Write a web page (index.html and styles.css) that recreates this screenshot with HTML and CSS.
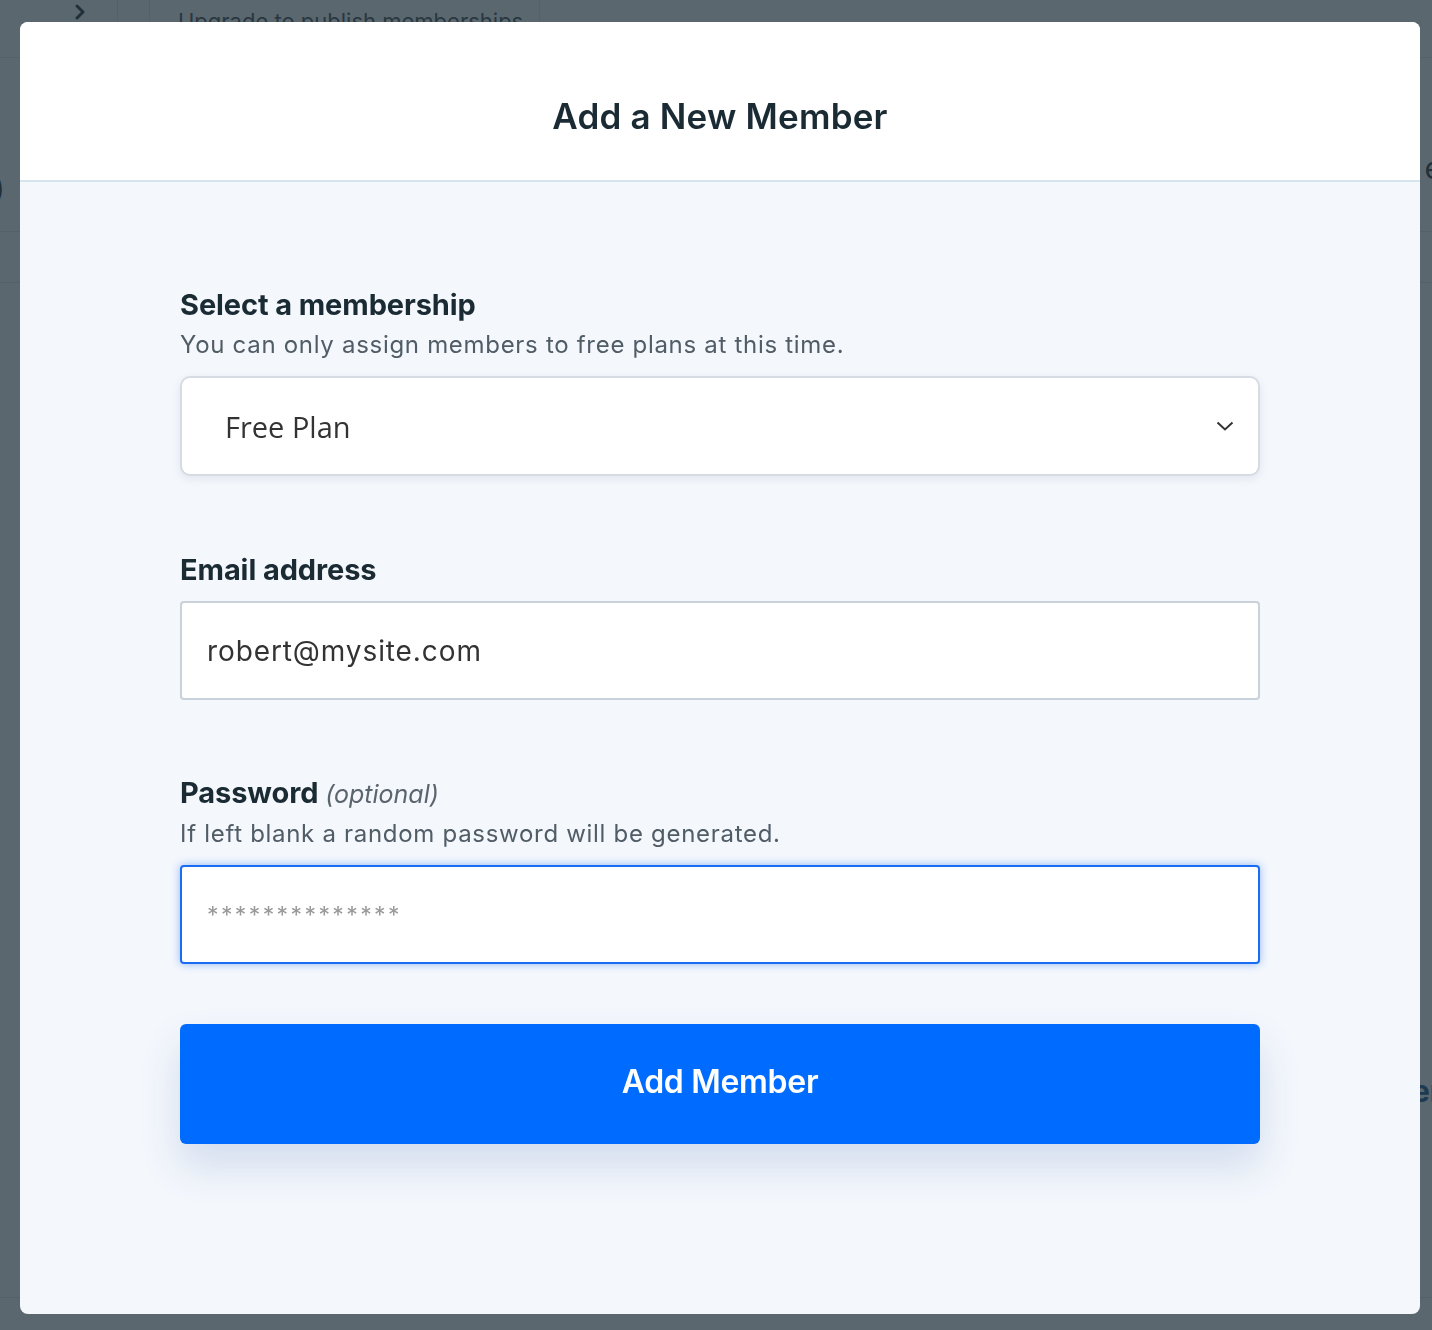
FILE: index.html
```html
<!DOCTYPE html>
<html lang="en">
<head>
<meta charset="utf-8">
<title>Add a New Member</title>
<link rel="stylesheet" href="styles.css">
</head>
<body>
<div class="page">
  <div class="topbar">
    <div class="cell cell-nav">
      <svg class="nav-chev" width="14" height="16" viewBox="0 0 14 16"><path d="M4 2 L10 8 L4 14" fill="none" stroke="#2a3a44" stroke-width="3" stroke-linecap="round" stroke-linejoin="round"/></svg>
    </div>
    <div class="cell cell-gap"></div>
    <div class="cell cell-text">Upgrade to publish memberships</div>
    <div class="cell cell-rest"></div>
  </div>
  <div class="row row-a"><span class="edge-l">)</span><span class="edge-r">e</span></div>
  <div class="row row-b"></div>
  <div class="row row-c"><span class="edge-r blue">er</span></div>
</div>

<div class="overlay">
  <div class="modal">
    <div class="modal-head">
      <h1 class="modal-title">Add a New Member</h1>
    </div>
    <form class="modal-body">
      <label class="field-label" for="plan">Select a membership</label>
      <p class="field-help">You can only assign members to free plans at this time.</p>
      <div class="select-wrap">
        <select id="plan" class="select">
          <option>Free Plan</option>
        </select>
        <svg class="select-chev" width="18" height="12" viewBox="0 0 18 12"><path d="M1.5 2.5 L9 9.5 L16.5 2.5" fill="none" stroke="#333" stroke-width="2"/></svg>
      </div>

      <label class="field-label label-email" for="email">Email address</label>
      <input id="email" class="input input-email" type="email" value="robert@mysite.com">

      <label class="field-label label-pass" for="pass">Password <span class="optional">(optional)</span></label>
      <p class="field-help">If left blank a random password will be generated.</p>
      <input id="pass" class="input input-pass" type="password" placeholder="**************">

      <button type="button" class="btn">Add Member</button>
    </form>
  </div>
</div>
</body>
</html>
```

FILE: styles.css
```css
* { box-sizing: border-box; }

html, body {
  margin: 0;
  padding: 0;
}

body {
  width: 1432px;
  height: 1330px;
  overflow: hidden;
  background: #ffffff;
  font-family: Inter, "Noto Sans", sans-serif;
}

/* background page (under the overlay) */
.page {
  width: 1432px;
  height: 1330px;
  background: #ffffff;
}

.topbar {
  display: flex;
  height: 58px;
  border-bottom: 1px solid #e3e7ea;
}

.cell {
  height: 58px;
}

.cell-nav {
  width: 118px;
  display: flex;
  justify-content: flex-end;
  padding: 4px 30px 0 0;
  border-right: 1px solid #e6e9ec;
}

.cell-gap {
  width: 32px;
  border-right: 1px solid #e6e9ec;
}

.cell-text {
  width: 390px;
  padding: 8px 0 0 28px;
  font-size: 22px;
  color: #4b555c;
  border-right: 1px solid #e6e9ec;
}

.cell-rest {
  flex: 1;
}

.row {
  display: flex;
  align-items: flex-start;
  border-bottom: 1px solid #e3e7ea;
  color: #2f3b43;
}

.row-a {
  height: 174px;
  font-size: 30px;
}

.row-b {
  height: 51px;
}

.row-c {
  height: 1015px;
  font-size: 30px;
  font-weight: 700;
}

.edge-l {
  margin: 112px 0 0 -6px;
}

.edge-r {
  margin: 92px -10px 0 auto;
}

.row-c .edge-r {
  margin-top: 790px;
}

.blue {
  color: #1d5d98;
}

/* overlay + modal */
.overlay {
  position: fixed;
  inset: 0;
  background: rgba(28, 45, 54, 0.72);
  padding: 22px 12px 0 20px;
}

.modal {
  width: 1400px;
  height: 1292px;
  border-radius: 8px;
  background: #f4f7fc;
  overflow: hidden;
}

.modal-head {
  height: 160px;
  background: #ffffff;
  border-bottom: 2px solid #d7e3ed;
  display: flex;
  justify-content: center;
  padding-top: 72px;
}

.modal-title {
  margin: 0;
  font-size: 35px;
  line-height: 44px;
  font-weight: 600;
  color: #1b2b33;
  letter-spacing: 0.2px;
}

.modal-body {
  display: flex;
  flex-direction: column;
  padding: 105px 160px 0 160px;
}

.field-label {
  display: block;
  font-size: 29px;
  line-height: 36px;
  font-weight: 700;
  color: #1b2b33;
  letter-spacing: -0.1px;
}

.optional {
  font-weight: 400;
  font-style: italic;
  color: #5a656d;
  font-size: 25px;
  letter-spacing: 0;
}

.field-help {
  margin: 6px 0 0 0;
  font-size: 24px;
  line-height: 32px;
  color: #505c66;
  letter-spacing: 0.7px;
}

.select-wrap {
  position: relative;
  margin-top: 15px;
  width: 1080px;
  height: 100px;
}

.select {
  appearance: none;
  -webkit-appearance: none;
  width: 100%;
  height: 100%;
  border: 2px solid #d7dbe3;
  border-radius: 10px;
  background: #ffffff;
  box-shadow: 0 3px 10px rgba(30, 50, 80, 0.08);
  padding: 0 0 0 43px;
  font-family: "Open Sans", "Noto Sans", sans-serif;
  font-size: 29px;
  color: #333333;
  outline: none;
}

.select-chev {
  position: absolute;
  right: 26px;
  top: 44px;
  pointer-events: none;
}

.label-email {
  margin-top: 76px;
}

.input {
  width: 1080px;
  height: 99px;
  margin-top: 13px;
  border-radius: 4px;
  background: #ffffff;
  padding: 0 0 0 25px;
  font-family: Inter, "Noto Sans", sans-serif;
  outline: none;
}

.input-email {
  border: 2px solid #c9d1da;
  font-size: 28px;
  color: #333333;
  letter-spacing: 0.9px;
}

.label-pass {
  margin-top: 75px;
}

.input-pass {
  margin-top: 15px;
  border: 2px solid #1a6cf2;
  box-shadow: 0 0 8px rgba(26, 108, 242, 0.45);
  font-size: 23px;
  color: #333333;
}

.input-pass::placeholder {
  color: #999999;
  letter-spacing: 2.4px;
}

.btn {
  margin-top: 60px;
  width: 1080px;
  height: 120px;
  border: none;
  border-radius: 6px;
  background: #006cff;
  color: #ffffff;
  font-family: Inter, "Noto Sans", sans-serif;
  font-size: 32px;
  font-weight: 600;
  letter-spacing: -0.3px;
  padding: 0 0 6px 0;
  box-shadow: 0 22px 40px rgba(40, 90, 160, 0.16);
  cursor: pointer;
}
```
